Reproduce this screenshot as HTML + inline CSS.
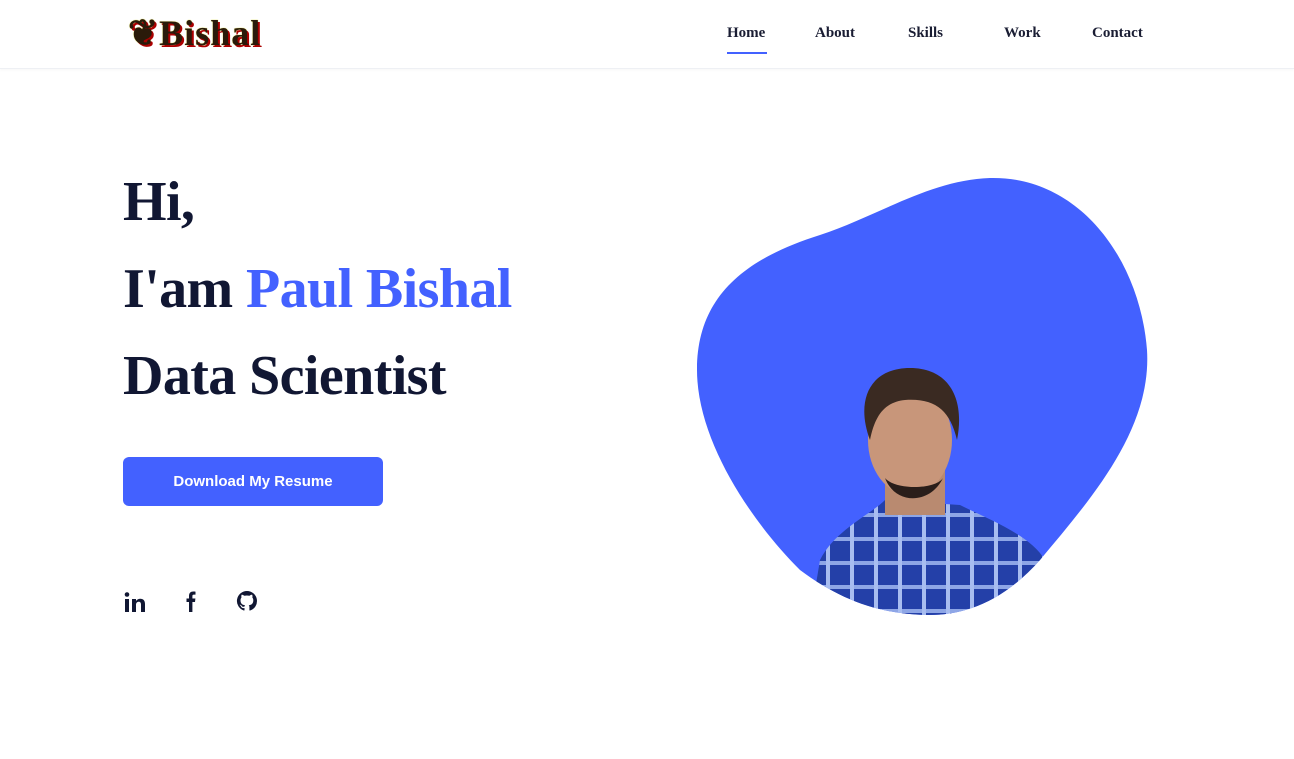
<!DOCTYPE html>
<html><head><style>
body{margin:0;width:1294px;height:759px;background:#fff;font-family:"Liberation Sans",sans-serif;overflow:hidden;position:relative}
header{position:absolute;left:0;top:0;width:1294px;height:68px;border-bottom:1px solid #eef0f4;box-shadow:0 1px 3px rgba(0,0,0,.04)}
.logo{position:absolute;left:128px;top:12px;font-family:"Liberation Serif",serif;font-weight:bold;font-size:36px;color:#2a1a0a;text-shadow:2px 2px 0 #a00,0 0 1px #cc0;letter-spacing:1px}
nav a{position:absolute;top:25px;font-family:"Liberation Serif",serif;font-weight:bold;font-size:15px;color:#1a1d33;text-decoration:none}
.ul{position:absolute;left:727px;top:52px;width:40px;height:2px;background:#4361ff}
h1{position:absolute;left:123px;margin:0;font-family:"Liberation Serif",serif;font-weight:bold;font-size:56px;letter-spacing:-0.6px;color:#111733;line-height:1}
.b{color:#4361ff}
.btn{position:absolute;left:123px;top:457px;width:260px;height:49px;background:#4361ff;border-radius:6px;color:#fff;font-weight:bold;font-size:15px;text-align:center;line-height:49px}
</style></head><body>
<header>
<div class="logo">❦Bishal</div>
<nav>
<a style="left:727px">Home</a><a style="left:815px">About</a><a style="left:908px">Skills</a><a style="left:1004px">Work</a><a style="left:1092px">Contact</a>
</nav>
<div class="ul"></div>
</header>
<h1 style="top:174px">Hi,</h1>
<h1 style="top:261px">I'am <span class="b">Paul Bishal</span></h1>
<h1 style="top:348px">Data Scientist</h1>
<div class="btn">Download My Resume</div>
<svg style="position:absolute;left:120px;top:588px" width="160" height="28" viewBox="0 0 160 28">
<g fill="#111733">
<rect x="5" y="11" width="4" height="13"/><circle cx="7" cy="6.5" r="2.3"/>
<path d="M12 11h4v2c1-1.5 2.5-2.3 4.3-2.3 3 0 4.7 1.8 4.7 5.3V24h-4v-7.5c0-1.8-.7-2.8-2.2-2.8s-2.8 1-2.8 3V24h-4z"/>
<path d="M69 24v-10h-2.5v-3.5H69V8c0-3 1.6-4.5 4.3-4.5 1 0 2 .1 2.2.1v3h-1.6c-1.2 0-1.5.6-1.5 1.5v2.4h3l-.4 3.5h-2.6V24z"/>
<path d="M127 3a10 10 0 0 0-3.2 19.5c.5.1.7-.2.7-.5v-2c-2.8.6-3.4-1.2-3.4-1.2-.5-1.2-1.1-1.5-1.1-1.5-.9-.6.1-.6.1-.6 1 .1 1.5 1 1.5 1 .9 1.5 2.4 1.1 2.9.8.1-.6.4-1.1.6-1.300-2.2-.3-4.600-1.100-4.600-5 0-1.100.4-2 1-2.700-.1-.3-.4-1.300.1-2.700 0 0 .8-.3 2.800 1a9.600 9.600 0 0 1 5 0c1.900-1.300 2.800-1 2.800-1 .5 1.400.2 2.400.1 2.700.6.7 1 1.600 1 2.700 0 3.900-2.400 4.700-4.600 5 .4.3.7.9.7 1.900V22c0 .3.2.6.7.5A10 10 0 0 0 127 3z"/>
</g></svg>
<svg style="position:absolute;left:690px;top:170px" width="470" height="450" viewBox="690 170 470 450">
<defs><clipPath id="c"><path d="M990 178C1080 176 1140 260 1147 350C1152 430 1090 500 1040 560C1000 605 960 616 925 615C880 614 840 600 800 570C750 520 697 440 697 370C697 300 740 260 820 235C880 215 930 180 990 178Z"/></clipPath>
<pattern id="p" width="24" height="24" patternUnits="userSpaceOnUse"><rect width="24" height="24" fill="#2440a8"/><rect x="0" y="9" width="24" height="4" fill="#8ea6e6"/><rect x="10" y="0" width="4" height="24" fill="#a8bdf0"/></pattern></defs>
<g clip-path="url(#c)">
<rect x="690" y="170" width="470" height="450" fill="#4361ff"/>
<path d="M810 620L820 560C835 530 870 515 885 500L960 505C990 520 1030 535 1045 560L1060 620Z" fill="url(#p)"/>
<rect x="885" y="470" width="60" height="45" fill="#b98a70"/>
<ellipse cx="910" cy="440" rx="42" ry="55" fill="#c8967a"/>
<path d="M870 440C855 400 870 368 910 368C950 368 965 400 957 440C950 410 935 398 905 400C885 402 875 415 870 440Z" fill="#3a2a22"/>
<path d="M885 478C895 505 930 505 943 478C935 490 895 490 885 478Z" fill="#2a1e1a"/>
</g></svg>
</body></html>
